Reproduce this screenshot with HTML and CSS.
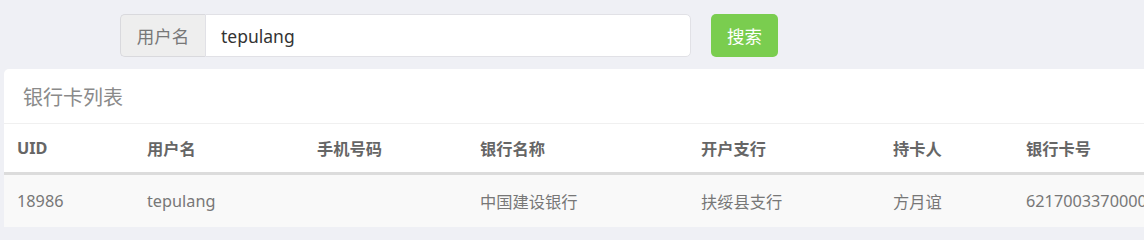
FILE: index.html
```html
<!DOCTYPE html>
<html lang="zh-CN">
<head>
<meta charset="utf-8">
<title>银行卡列表</title>
<link rel="stylesheet" href="styles.css">
</head>
<body>
  <div class="search-bar">
    <div class="input-group">
      <span class="addon">用户名</span>
      <input class="field" type="text" value="tepulang">
    </div>
    <button class="btn-search" type="button">搜索</button>
  </div>
  <div class="card">
    <div class="card-title">银行卡列表</div>
    <table class="grid">
      <colgroup>
        <col class="c1"><col class="c2"><col class="c3"><col class="c4"><col class="c5"><col class="c6"><col class="c7">
      </colgroup>
      <thead>
        <tr>
          <th>UID</th>
          <th>用户名</th>
          <th>手机号码</th>
          <th>银行名称</th>
          <th>开户支行</th>
          <th>持卡人</th>
          <th>银行卡号</th>
        </tr>
      </thead>
      <tbody>
        <tr>
          <td>18986</td>
          <td>tepulang</td>
          <td></td>
          <td>中国建设银行</td>
          <td>扶绥县支行</td>
          <td>方月谊</td>
          <td>6217003370000412858</td>
        </tr>
      </tbody>
    </table>
  </div>
</body>
</html>
```
FILE: styles.css
```css
html, body {
  margin: 0;
  padding: 0;
}
body {
  background: #eff0f5;
  font-family: "Noto Sans", "Noto Sans CJK SC", sans-serif;
  overflow: hidden;
  width: 1144px;
  height: 229px;
}
.search-bar {
  display: flex;
  align-items: stretch;
  padding: 14px 0 0 120px;
  height: 43px;
}
.input-group {
  display: flex;
  width: 571px;
  height: 43px;
  box-sizing: border-box;
}
.addon {
  display: flex;
  align-items: center;
  justify-content: center;
  width: 85px;
  box-sizing: border-box;
  background: #eeeeee;
  border: 1px solid #d9d9dd;
  border-right: none;
  border-radius: 5px 0 0 5px;
  color: #777;
  font-size: 17.5px;
  font-family: "Noto Sans CJK SC", sans-serif;
}
.field {
  flex: 1;
  min-width: 0;
  box-sizing: border-box;
  height: 43px;
  margin: 0;
  border: 1px solid #e1e1e6;
  border-radius: 0 5px 5px 0;
  padding: 0 15px;
  font-family: "Noto Sans", "Noto Sans CJK SC", sans-serif;
  font-size: 17.5px;
  color: #333;
  background: #fff;
  outline: none;
}
.btn-search {
  margin-left: 20px;
  width: 67px;
  height: 43px;
  border: none;
  border-radius: 5px;
  background: #7acd4f;
  color: #fff;
  font-family: "Noto Sans CJK SC", sans-serif;
  font-size: 17.5px;
  padding: 0;
}
.card {
  margin: 12px 0 0 4px;
  width: 1300px;
  background: #fff;
  border-radius: 5px 5px 0 0;
  overflow: hidden;
}
.card-title {
  height: 54px;
  display: flex;
  align-items: center;
  padding-left: 19px;
  font-size: 20px;
  color: #8a8a8a;
  font-family: "Noto Sans CJK SC", sans-serif;
  border-bottom: 1px solid #f0f0f0;
}
.grid {
  width: 100%;
  table-layout: fixed;
  border-collapse: collapse;
}
.c1 { width: 130px; }
.c2 { width: 170px; }
.c3 { width: 163px; }
.c4 { width: 221px; }
.c5 { width: 192px; }
.c6 { width: 133px; }
.grid th,
.grid td {
  text-align: left;
  padding: 0 0 0 13px;
  white-space: nowrap;
  overflow: hidden;
}
.grid th {
  height: 48px;
  font-size: 16.25px;
  font-weight: bold;
  color: #666;
  border-bottom: 3px solid #dcdcdc;
}
.grid td {
  height: 52px;
  font-size: 16.25px;
  color: #777;
  background: #f9f9f9;
}
```
